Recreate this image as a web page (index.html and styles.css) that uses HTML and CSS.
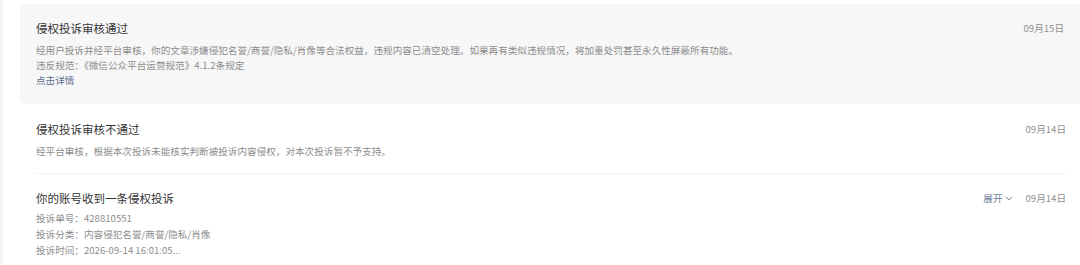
FILE: index.html
```html
<!DOCTYPE html>
<html lang="zh-CN">
<head>
<meta charset="utf-8">
<title>通知</title>
<link rel="stylesheet" href="styles.css">
</head>
<body>
<div class="page">
  <div class="edge"></div>
  <div class="list">
    <div class="item card">
      <div class="head">
        <div class="title">侵权投诉审核通过</div>
        <div class="date">09月15日</div>
      </div>
      <div class="body lh15">
        <div>经用户投诉并经平台审核，你的文章涉嫌侵犯名誉/商誉/隐私/肖像等合法权益，违规内容已清空处理。如果再有类似违规情况，将加重处罚甚至永久性屏蔽所有功能。</div>
        <div>违反规范：《微信公众平台运营规范》4.1.2条规定</div>
        <div class="link">点击详情</div>
      </div>
    </div>
    <div class="item plain sep">
      <div class="head">
        <div class="title">侵权投诉审核不通过</div>
        <div class="date">09月14日</div>
      </div>
      <div class="body lh15">
        <div>经平台审核，根据本次投诉未能核实判断被投诉内容侵权，对本次投诉暂不予支持。</div>
      </div>
    </div>
    <div class="item plain last">
      <div class="head">
        <div class="title">你的账号收到一条侵权投诉</div>
        <div class="tools">
          <span class="expand">展开<svg class="chev" width="8" height="5" viewBox="0 0 8 5"><path d="M0.7 0.8 L4 4 L7.3 0.8" fill="none" stroke="#7d8aa8" stroke-width="1"/></svg></span>
          <div class="date">09月14日</div>
        </div>
      </div>
      <div class="body lh16">
        <div>投诉单号：428810551</div>
        <div>投诉分类：内容侵犯名誉/商誉/隐私/肖像</div>
        <div>投诉时间：2026-09-14 16:01:05...</div>
      </div>
    </div>
  </div>
</div>
</body>
</html>
```

FILE: styles.css
```css
html, body {
  margin: 0;
  padding: 0;
  background: #ffffff;
}
body {
  font-family: "Noto Sans CJK SC", "Noto Sans", sans-serif;
  width: 1080px;
  height: 265px;
  overflow: hidden;
}
.page {
  display: flex;
  height: 265px;
}
.edge {
  width: 3px;
  background: #f4f5f7;
}
.list {
  flex: 1;
  padding: 4px 0 0 17px;
  display: flex;
  flex-direction: column;
}
.item {
  display: flex;
  flex-direction: column;
}
.card {
  background: #f7f7f7;
  border-radius: 6px 0 0 6px;
  padding: 14px 16px 16.5px 16px;
}
.plain {
  margin: 0 14px 0 16px;
}
.sep {
  padding: 15px 0 14.5px 0;
  border-bottom: 1px solid #f2f2f2;
}
.last {
  padding: 14px 0 0 0;
}
.head {
  display: flex;
  justify-content: space-between;
  align-items: center;
  height: 20px;
}
.title {
  font-size: 11.5px;
  line-height: 20px;
  color: #353535;
}
.date {
  font-size: 9.6px;
  color: #8f8f8f;
  line-height: 20px;
}
.tools {
  display: flex;
  align-items: center;
  gap: 13px;
}
.expand {
  display: flex;
  align-items: center;
  gap: 2px;
  font-size: 9.6px;
  color: #6b7897;
  line-height: 20px;
}
.chev {
  display: block;
  margin-top: 1px;
}
.body {
  font-size: 9.6px;
  color: #8d8d8d;
  margin-top: 4.5px;
}
.lh15 {
  line-height: 15px;
}
.lh16 {
  line-height: 16px;
  margin-top: 2px;
}
.link {
  color: #5a6a8f;
}
```
